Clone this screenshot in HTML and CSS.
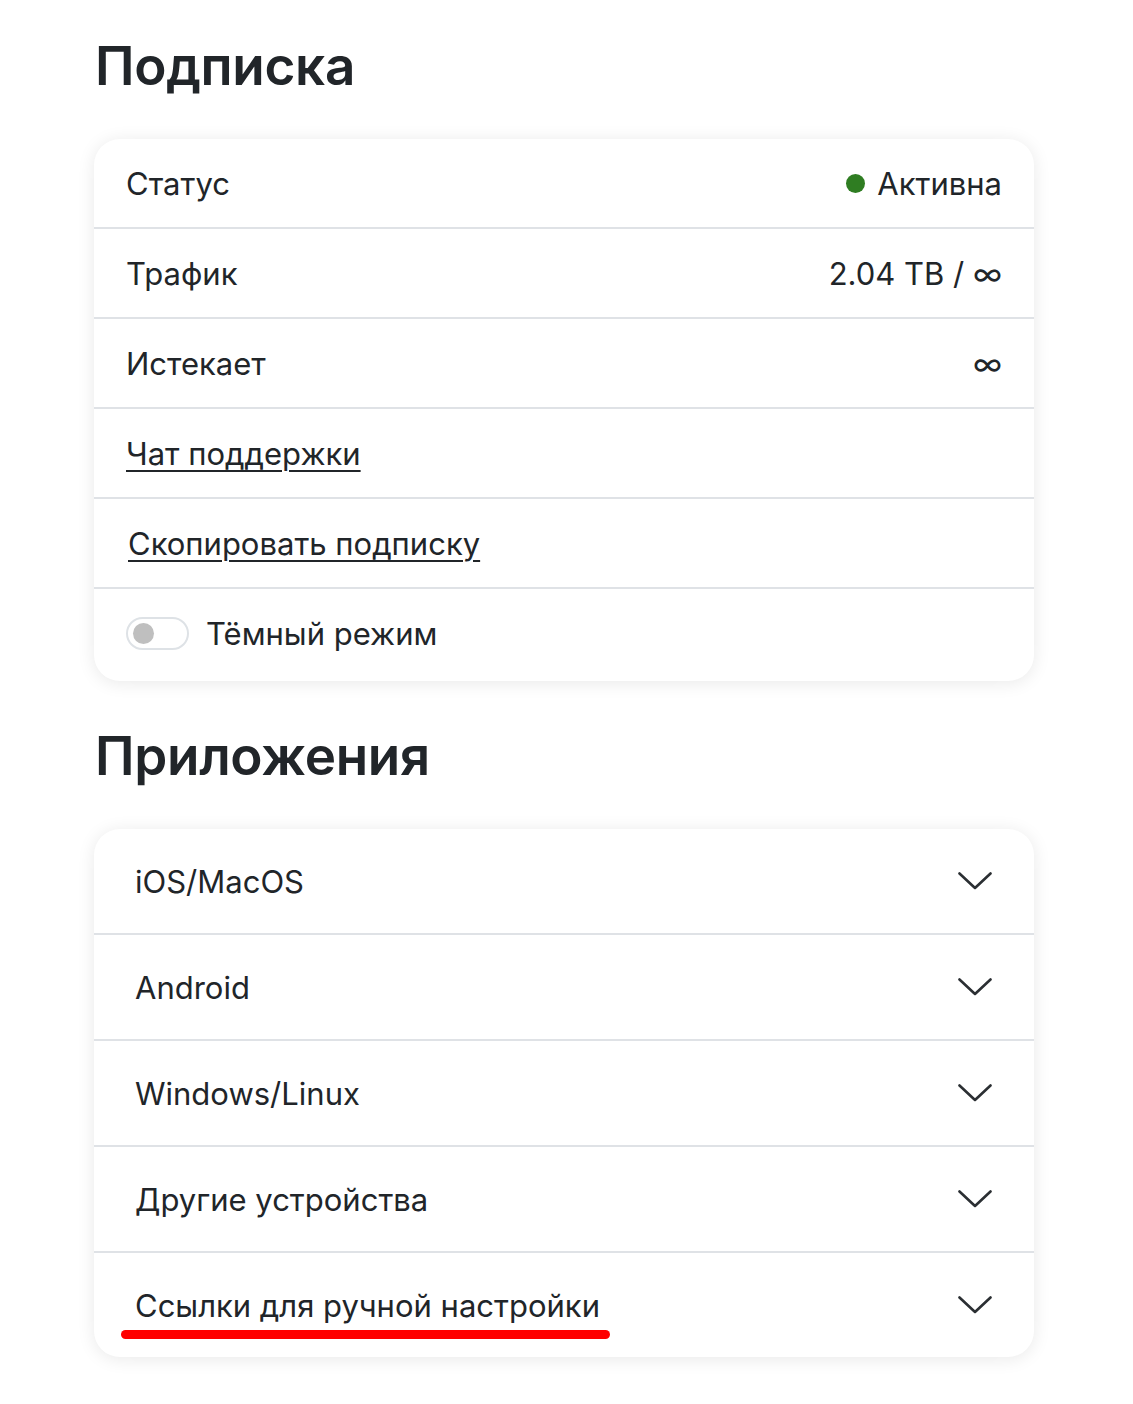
FILE: index.html
```html
<!DOCTYPE html>
<html lang="ru">
<head>
<meta charset="utf-8">
<link rel="stylesheet" href="styles.css">
</head>
<body>
<main class="page">
  <h1 class="title">Подписка</h1>
  <section class="card">
    <div class="row row-sub">
      <span>Статус</span>
      <span class="value"><span class="dot"></span>Активна</span>
    </div>
    <div class="row row-sub">
      <span>Трафик</span>
      <span class="value">2.04 TB / ∞</span>
    </div>
    <div class="row row-sub">
      <span>Истекает</span>
      <span class="value">∞</span>
    </div>
    <div class="row row-sub">
      <a class="link" href="#">Чат поддержки</a>
    </div>
    <div class="row row-sub">
      <a class="link link-copy" href="#">Скопировать подписку</a>
    </div>
    <div class="row row-sub row-toggle">
      <span class="switch"><span class="knob"></span></span>
      <span>Тёмный режим</span>
    </div>
  </section>

  <h1 class="title title-apps">Приложения</h1>
  <section class="card">
    <div class="row row-app">
      <span>iOS/MacOS</span>
      <svg class="chev" viewBox="0 0 34 18"><path d="M1.5 1.5 L17 16 L32.5 1.5"/></svg>
    </div>
    <div class="row row-app">
      <span>Android</span>
      <svg class="chev" viewBox="0 0 34 18"><path d="M1.5 1.5 L17 16 L32.5 1.5"/></svg>
    </div>
    <div class="row row-app">
      <span>Windows/Linux</span>
      <svg class="chev" viewBox="0 0 34 18"><path d="M1.5 1.5 L17 16 L32.5 1.5"/></svg>
    </div>
    <div class="row row-app">
      <span>Другие устройства</span>
      <svg class="chev" viewBox="0 0 34 18"><path d="M1.5 1.5 L17 16 L32.5 1.5"/></svg>
    </div>
    <div class="row row-app row-mark">
      <span>Ссылки для ручной настройки</span>
      <svg class="chev" viewBox="0 0 34 18"><path d="M1.5 1.5 L17 16 L32.5 1.5"/></svg>
      <span class="redline"></span>
    </div>
  </section>
</main>
</body>
</html>
```

FILE: styles.css
```css
* { box-sizing: border-box; }
html, body { margin: 0; padding: 0; background: #fff; }
body {
  font-family: Inter, "Liberation Sans", "Noto Sans", sans-serif;
  color: #212529;
}
.page {
  width: 940px;
  margin-left: 94px;
  padding-top: 30px;
  padding-bottom: 48px;
}
.title {
  margin: 0 0 37px 1px;
  font-size: 53px;
  font-weight: 600;
  line-height: 72px;
  letter-spacing: -0.3px;
}
.title-apps {
  margin-top: 39px;
  margin-bottom: 37px;
}
.card {
  background: #fff;
  border-radius: 26px;
  box-shadow: 0 2px 18px rgba(0, 0, 0, 0.09);
  overflow: hidden;
}
.row {
  position: relative;
  display: flex;
  align-items: center;
  justify-content: space-between;
  font-size: 31px;
  border-bottom: 2px solid #dfe2e6;
}
.row:last-child { border-bottom: 0; }
.row-sub {
  height: 90px;
  padding: 0 32px 0 32px;
}
.row-sub:last-child { height: 92px; }
.value {
  display: flex;
  align-items: center;
}
.dot {
  width: 19px;
  height: 19px;
  border-radius: 50%;
  background: #2f7d22;
  margin-right: 12px;
}
.link {
  color: #212529;
  text-decoration: underline;
  text-decoration-thickness: 2px;
  text-underline-offset: 5px;
}
.link-copy { margin-left: 2px; }
.row-toggle {
  justify-content: flex-start;
  padding-bottom: 4px;
}
.switch {
  width: 63px;
  height: 33px;
  border: 2px solid #dee2e6;
  border-radius: 17px;
  margin-right: 17px;
  display: flex;
  align-items: center;
  padding-left: 5px;
}
.knob {
  width: 21px;
  height: 21px;
  border-radius: 50%;
  background: #bfbfbf;
}
.row-app {
  height: 106px;
  padding: 0 42px 0 41px;
}
.row-app:last-child { height: 104px; }
.chev {
  width: 34px;
  height: 18px;
  fill: none;
  stroke: #2b2f33;
  stroke-width: 2.6;
  stroke-linecap: round;
  stroke-linejoin: round;
}
.redline {
  position: absolute;
  left: 27px;
  top: 77px;
  width: 489px;
  height: 9px;
  border-radius: 5px;
  background: #ff0000;
  filter: blur(0.7px);
}
```
